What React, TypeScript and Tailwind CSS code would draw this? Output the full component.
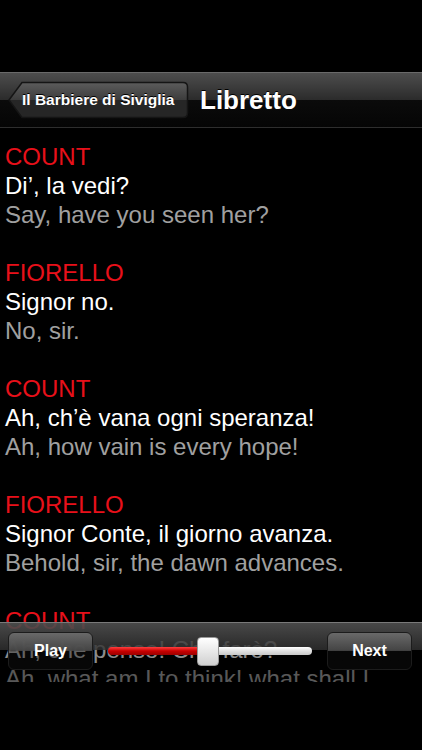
import React from 'react';

type Line = { who: string; it: string; en: string };

const lines: Line[] = [
  { who: 'COUNT', it: 'Di’, la vedi?', en: 'Say, have you seen her?' },
  { who: 'FIORELLO', it: 'Signor no.', en: 'No, sir.' },
  { who: 'COUNT', it: 'Ah, ch’è vana ogni speranza!', en: 'Ah, how vain is every hope!' },
  { who: 'FIORELLO', it: 'Signor Conte, il giorno avanza.', en: 'Behold, sir, the dawn advances.' },
  { who: 'COUNT', it: 'Ah, che penso! Che farò?', en: 'Ah, what am I to think! what shall I do?' },
];

function BackButton() {
  return (
    <div className="relative flex h-[38px] items-center ml-[8px]">
      <svg className="absolute left-0 top-0" width="181" height="38" viewBox="0 0 181 38">
        <defs>
          <linearGradient id="bb" x1="0" y1="0" x2="0" y2="1">
            <stop offset="0" stopColor="#5c5c5c" />
            <stop offset="0.5" stopColor="#3c3c3c" />
            <stop offset="0.5" stopColor="#262626" />
            <stop offset="1" stopColor="#262626" />
          </linearGradient>
        </defs>
        <path d="M1 19 L14 1.5 L175 1.5 Q179.5 1.5 179.5 6 L179.5 32 Q179.5 36.5 175 36.5 L14 36.5 Z" fill="url(#bb)" stroke="#151515" strokeWidth="1.5" />
      </svg>
      <span className="relative w-[181px] pl-[14px] text-[15.5px] font-bold text-white whitespace-nowrap" style={{ textShadow: '0 -1px 0 #000' }}>
        Il Barbiere di Siviglia
      </span>
    </div>
  );
}

function ToolButton({ label }: { label: string }) {
  return (
    <div className="flex h-[38px] w-[85px] items-center justify-center rounded-[6px] border border-[#1c1c1c] bg-[linear-gradient(to_bottom,rgba(110,110,110,0.9),rgba(70,70,70,0.9)_50%,rgba(20,20,20,0.35)_50%,rgba(20,20,20,0.35))] text-[16px] font-bold text-white">
      {label}
    </div>
  );
}

export default function App() {
  return (
    <div className="h-[750px] w-[422px] bg-black font-['Liberation_Sans',Arial,sans-serif] overflow-hidden">
      <div className="h-[72px]" />
      <div className="flex h-[56px] items-center gap-[11px] border-t border-[#6a6a6a] border-b border-b-[#2e2e2e] bg-[linear-gradient(to_bottom,#4d4d4d,#2b2b2b_50%,#0b0b0b_50%,#050505)]">
        <BackButton />
        <span className="text-[26px] font-bold text-white" style={{ textShadow: '0 -1px 0 #000' }}>Libretto</span>
      </div>
      <div className="relative h-[554px] overflow-hidden">
        <div className="flex flex-col gap-[29px] pt-[14px] pl-[5px] pr-[20px]">
          {lines.map((l, i) => (
            <div key={i} className="flex flex-col text-[24px] leading-[29px]">
              <span className="text-[#e8101a]">{l.who}</span>
              <span className="text-white">{l.it}</span>
              <span className="text-[#a0a0a0]">{l.en}</span>
            </div>
          ))}
        </div>
        <div className="absolute left-0 right-0 top-[494px] h-[60px] border-t border-[#7a7a7a] bg-[linear-gradient(to_bottom,rgba(80,80,80,0.9),rgba(45,45,45,0.9)_45%,rgba(0,0,0,0.45)_45%,rgba(0,0,0,0.45))]">
          <div className="flex items-center justify-between pl-[8px] pr-[10px] pt-[9px]">
            <ToolButton label="Play" />
            <div className="relative flex h-[30px] w-[204px] items-center">
              <div className="flex h-[8px] w-full overflow-hidden rounded-full">
                <div className="w-[46%] bg-[linear-gradient(to_bottom,#ff4040,#c80000_50%,#9a0000)]" />
                <div className="flex-1 bg-[linear-gradient(to_bottom,#ffffff,#e0e0e0_50%,#c8c8c8)]" />
              </div>
              <div className="absolute left-[89px] top-[1px] h-[29px] w-[22px] rounded-[4px] border border-[#999] bg-[linear-gradient(to_bottom,#ffffff,#e8e8e8_50%,#d0d0d0)]" />
            </div>
            <ToolButton label="Next" />
          </div>
        </div>
      </div>
    </div>
  );
}
